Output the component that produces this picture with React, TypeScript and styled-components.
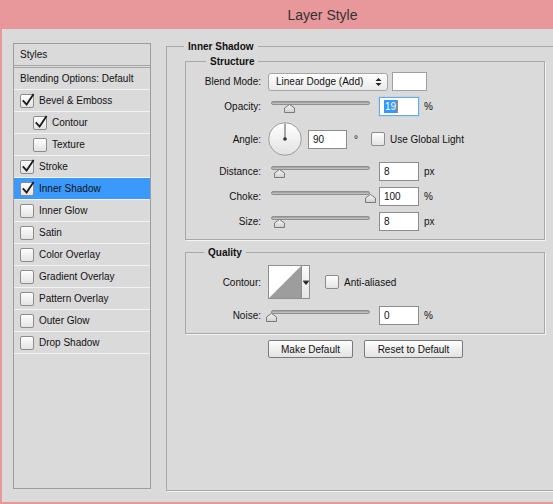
import styled, { createGlobalStyle } from "styled-components";

const GlobalStyle = createGlobalStyle`
  html, body {
    margin: 0;
    padding: 0;
  }
  body {
    font-family: "Liberation Sans", Arial, sans-serif;
    font-size: 10px;
    color: #111;
  }
`;

const Window = styled.div`
    width: 553px;
    height: 504px;
    display: flex;
    flex-direction: column;
    background: #e8979a;
    overflow: hidden;
`;

const TitleBar = styled.div`
    height: 29px;
    flex-shrink: 0;
    display: flex;
    align-items: center;
    justify-content: center;
    padding-left: 92px;
    font-size: 14px;
    color: #333;
`;

const Body = styled.div`
    flex: 1;
    margin: 0 0 2px 2px;
    background: #dadada;
    display: flex;
    align-items: flex-start;
    gap: 15px;
    padding: 14px 0 0 11px;
    overflow: hidden;
`;

/* ---------- left list ---------- */

const StylesPanel = styled.div`
    width: 138px;
    height: 446px;
    flex-shrink: 0;
    box-sizing: border-box;
    border: 1px solid #9d9d9d;
`;

const StyleRow = styled.div<{ $selected?: boolean; $indent?: boolean; $header?: boolean }>`
    height: 21px;
    display: flex;
    align-items: center;
    gap: 5px;
    padding-left: ${(p) => (p.$indent ? 19 : 6)}px;
    background: ${(p) => (p.$selected ? "#3b99fc" : "transparent")};
    border-bottom: ${(p) => (p.$header ? "3px double #a5a5a5" : "1px solid #f3f3f3")};
    white-space: nowrap;
`;

const Box = styled.span`
    position: relative;
    width: 14px;
    height: 14px;
    flex-shrink: 0;
    box-sizing: border-box;
    border: 1px solid #8c8c8c;
    border-radius: 2px;
    background: linear-gradient(#fdfdfd, #e4e4e4);
`;

const Tick = styled.svg`
    position: absolute;
    left: -1px;
    top: -1px;
    overflow: visible;
`;

function Check({ checked }: { checked?: boolean }) {
  return (
    <Box>
      {checked && (
        <Tick width="16" height="14" viewBox="0 0 16 14">
          <path d="M2.8 6.3 L6.6 10.6 L13.6 0" fill="none" stroke="#1a1a1a" strokeWidth="1.8" />
        </Tick>
      )}
    </Box>
  );
}

/* ---------- right side ---------- */

const Group = styled.fieldset`
    margin: 0;
    min-width: 0;
    box-sizing: border-box;
    border: 1px solid #a8a8a8;
    box-shadow: 1px 1px 0 #f4f4f4;
    padding: 0;
`;

const OuterGroup = styled(Group)`
    width: 400px;
    height: 451px;
    flex-shrink: 0;
    margin-top: -3px;
    padding-top: 2px;
`;

const InnerGroup = styled(Group)<{ $top: number; $pad: string }>`
    width: 360px;
    margin: ${(p) => p.$top}px 0 0 18px;
    padding: ${(p) => p.$pad};
`;

const Legend = styled.legend<{ $offset: number }>`
    font-weight: bold;
    line-height: 13px;
    padding: 0 4px;
    margin-left: ${(p) => p.$offset}px;
`;

const Rows = styled.div<{ $gap: number }>`
    display: flex;
    flex-direction: column;
    gap: ${(p) => p.$gap}px;
`;

const FormRow = styled.div`
    display: grid;
    grid-template-columns: 75px auto;
    column-gap: 7px;
    align-items: center;
`;

const Label = styled.div`
    text-align: right;
    white-space: nowrap;
`;

const Controls = styled.div`
    display: flex;
    align-items: center;
`;

const Select = styled.div`
    width: 120px;
    height: 18px;
    box-sizing: border-box;
    border: 1px solid #a6a6a6;
    border-radius: 3px;
    background: linear-gradient(#ffffff, #e9e9e9);
    display: flex;
    align-items: center;
    justify-content: space-between;
    padding: 0 5px 0 7px;
`;

const Swatch = styled.div`
    width: 35px;
    height: 19px;
    margin-left: 4px;
    box-sizing: border-box;
    border: 1px solid #a0a0a0;
    background: #fff;
`;

const Field = styled.div<{ $width?: number; $focused?: boolean }>`
    width: ${(p) => p.$width ?? 40}px;
    height: 19px;
    box-sizing: border-box;
    border: 1px solid ${(p) => (p.$focused ? "#6fa6dc" : "#8d8d8d")};
    box-shadow: ${(p) => (p.$focused ? "0 0 0 1px #b9d6f2" : "none")};
    background: #fff;
    display: flex;
    align-items: center;
    padding-left: 4px;
`;

const Selected = styled.span`
    background: #3399ff;
    color: #fff;
    padding: 1px 1px;
    border-right: 1px solid #e07a1f;
`;

const Unit = styled.span`
    margin-left: 5px;
`;

const SliderWrap = styled.div`
    position: relative;
    width: 105px;
    height: 19px;
    margin-right: 6px;
    flex-shrink: 0;
`;

const Track = styled.div`
    position: absolute;
    left: 3px;
    top: 4px;
    width: 99px;
    height: 4px;
    box-sizing: border-box;
    border: 1px solid #8f8f8f;
    border-radius: 2px;
    background: linear-gradient(#9a9a9a, #c8c8c8);
`;

const Thumb = styled.svg`
    position: absolute;
    top: 7px;
`;

function Slider({ value }: { value: number }) {
  const x = 3 + value * 99 - 5.5;
  return (
    <SliderWrap>
      <Track />
      <Thumb width="11" height="9" viewBox="0 0 11 9" style={{ left: x }}>
        <defs>
          <linearGradient id="thumbFill" x1="0" y1="0" x2="0" y2="1">
            <stop offset="0" stopColor="#f6f6f6" />
            <stop offset="1" stopColor="#cfcfcf" />
          </linearGradient>
        </defs>
        <path d="M0.5 4 L5.5 0.5 L10.5 4 L10.5 8.5 L0.5 8.5 Z" fill="url(#thumbFill)" stroke="#7a7a7a" />
      </Thumb>
    </SliderWrap>
  );
}

const Dial = styled.svg`
    flex-shrink: 0;
    margin-right: 6px;
`;

const Degree = styled.span`
    margin-left: 7px;
    margin-right: 13px;
`;

const CheckLabel = styled.span`
    margin-left: 5px;
    white-space: nowrap;
`;

const ContourPicker = styled.div`
    display: flex;
    height: 34px;
    margin-right: 15px;
`;

const ContourPreview = styled.div`
    width: 34px;
    height: 34px;
    box-sizing: border-box;
    border: 1px solid #8f8f8f;
    background: #fff;
`;

const ContourArrow = styled.div`
    width: 8px;
    height: 34px;
    box-sizing: border-box;
    border: 1px solid #8f8f8f;
    border-left: none;
    background: linear-gradient(#fafafa, #e6e6e6);
    display: flex;
    justify-content: center;
    padding-top: 14px;
`;

const ButtonRow = styled.div`
    display: flex;
    gap: 11px;
    margin-top: 6px;
    padding-left: 101px;
`;

const Button = styled.div<{ $width: number }>`
    width: ${(p) => p.$width}px;
    height: 18px;
    box-sizing: border-box;
    border: 1px solid #7a7a7a;
    border-radius: 2px;
    background: linear-gradient(#fdfdfd, #e3e3e3);
    display: flex;
    align-items: center;
    justify-content: center;
    white-space: nowrap;
`;

const styleItems: { label: string; checked?: boolean; indent?: boolean; selected?: boolean }[] = [
  { label: "Bevel & Emboss", checked: true },
  { label: "Contour", checked: true, indent: true },
  { label: "Texture", indent: true },
  { label: "Stroke", checked: true },
  { label: "Inner Shadow", checked: true, selected: true },
  { label: "Inner Glow" },
  { label: "Satin" },
  { label: "Color Overlay" },
  { label: "Gradient Overlay" },
  { label: "Pattern Overlay" },
  { label: "Outer Glow" },
  { label: "Drop Shadow" },
];

function SliderRow({ label, value, text, unit }: { label: string; value: number; text: string; unit: string }) {
  return (
    <FormRow>
      <Label>{label}</Label>
      <Controls>
        <Slider value={value} />
        <Field>{text}</Field>
        <Unit>{unit}</Unit>
      </Controls>
    </FormRow>
  );
}

export default function App() {
  return (
    <Window>
      <GlobalStyle />
      <TitleBar>Layer Style</TitleBar>
      <Body>
        <StylesPanel>
          <StyleRow $header>Styles</StyleRow>
          <StyleRow>Blending Options: Default</StyleRow>
          {styleItems.map((item) => (
            <StyleRow key={item.label} $indent={item.indent} $selected={item.selected}>
              <Check checked={item.checked} />
              {item.label}
            </StyleRow>
          ))}
        </StylesPanel>

        <OuterGroup>
          <Legend $offset={17}>Inner Shadow</Legend>

          <InnerGroup $top={0} $pad="4px 0 8px 0">
            <Legend $offset={20}>Structure</Legend>
            <Rows $gap={6}>
              <FormRow>
                <Label>Blend Mode:</Label>
                <Controls>
                  <Select>
                    Linear Dodge (Add)
                    <svg width="7" height="10" viewBox="0 0 7 10">
                      <path d="M0.5 4 L3.5 1 L6.5 4 Z M0.5 6 L3.5 9 L6.5 6 Z" fill="#222" />
                    </svg>
                  </Select>
                  <Swatch />
                </Controls>
              </FormRow>

              <FormRow>
                <Label>Opacity:</Label>
                <Controls>
                  <Slider value={0.19} />
                  <Field $focused>
                    <Selected>19</Selected>
                  </Field>
                  <Unit>%</Unit>
                </Controls>
              </FormRow>

              <FormRow>
                <Label>Angle:</Label>
                <Controls>
                  <Dial width="34" height="34" viewBox="0 0 34 34">
                    <defs>
                      <linearGradient id="dialFill" x1="0" y1="0" x2="0" y2="1">
                        <stop offset="0" stopColor="#ffffff" />
                        <stop offset="1" stopColor="#e2e2e2" />
                      </linearGradient>
                    </defs>
                    <circle cx="17" cy="17" r="16.3" fill="url(#dialFill)" stroke="#9c9c9c" />
                    <line x1="17" y1="17" x2="17" y2="1.5" stroke="#555" strokeWidth="1" />
                    <circle cx="17" cy="17" r="1.8" fill="#333" />
                  </Dial>
                  <Field $width={39}>90</Field>
                  <Degree>°</Degree>
                  <Check />
                  <CheckLabel>Use Global Light</CheckLabel>
                </Controls>
              </FormRow>

              <SliderRow label="Distance:" value={0.09} text="8" unit="px" />
              <SliderRow label="Choke:" value={1} text="100" unit="%" />
              <SliderRow label="Size:" value={0.09} text="8" unit="px" />
            </Rows>
          </InnerGroup>

          <InnerGroup $top={6} $pad="6px 0 8px 0">
            <Legend $offset={18}>Quality</Legend>
            <Rows $gap={7}>
              <FormRow>
                <Label>Contour:</Label>
                <Controls>
                  <ContourPicker>
                    <ContourPreview>
                      <svg width="32" height="32" viewBox="0 0 32 32">
                        <path d="M0 32 L32 0 L32 32 Z" fill="#9d9d9d" />
                      </svg>
                    </ContourPreview>
                    <ContourArrow>
                      <svg width="6" height="5" viewBox="0 0 6 5">
                        <path d="M0 0 H6 M0.5 1.5 L5.5 1.5 L3 4.5 Z" stroke="#222" strokeWidth="0.8" fill="#222" />
                      </svg>
                    </ContourArrow>
                  </ContourPicker>
                  <Check />
                  <CheckLabel>Anti-aliased</CheckLabel>
                </Controls>
              </FormRow>
              <SliderRow label="Noise:" value={0} text="0" unit="%" />
            </Rows>
          </InnerGroup>

          <ButtonRow>
            <Button $width={85}>Make Default</Button>
            <Button $width={99}>Reset to Default</Button>
          </ButtonRow>
        </OuterGroup>
      </Body>
    </Window>
  );
}
